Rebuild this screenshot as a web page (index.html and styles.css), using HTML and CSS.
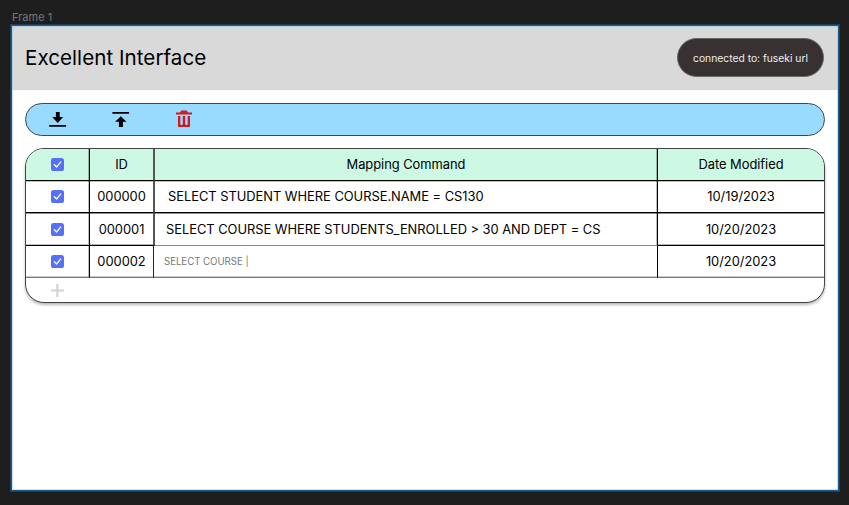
FILE: index.html
```html
<!DOCTYPE html>
<html lang="en">
<head>
<meta charset="utf-8">
<title>Excellent Interface</title>
<link rel="stylesheet" href="styles.css">
</head>
<body>
<svg class="defs" width="0" height="0" aria-hidden="true">
  <symbol id="check" viewBox="0 0 13 13"><rect width="13" height="13" rx="2.6" fill="#5570fb"/><path d="M3.3 6.8 5.6 9 9.8 3.9" fill="none" stroke="#fff" stroke-width="1.3" stroke-linecap="round" stroke-linejoin="round"/></symbol>
</svg>
<div class="frame-label">Frame 1</div>
<main class="frame">
  <header class="header">
    <h1>Excellent Interface</h1>
    <div class="status">connected to: fuseki url</div>
  </header>
  <nav class="toolbar">
    <svg class="icon" viewBox="0 0 18 18"><path d="M6.9 2.1h3.8v5h3.5L8.7 13 3.3 7.1h3.6zM.2 15h16.9v1.8H.2z"/></svg>
    <svg class="icon" viewBox="0 0 18 18"><path d="M.4 2h16.7v1.8H.4zM8.8 6.2l5.7 5.6h-3.6V17H6.9v-5.2H3.1z"/></svg>
    <svg class="icon trash" viewBox="0 0 18 18"><path d="M1 2.4h4L6.3.5h5.4L13 2.4h4v2.1H1zM3 6h2.3v8.8h2.5V6h2.4v8.8h2.5V6H15v11H3z"/></svg>
  </nav>
  <section class="table">
    <div class="row head">
      <div class="cell"><svg class="check"><use href="#check"/></svg></div>
      <div class="cell id"><span>ID</span></div>
      <div class="cell"><span>Mapping Command</span></div>
      <div class="cell"><span>Date Modified</span></div>
    </div>
    <div class="row first">
      <div class="cell"><svg class="check"><use href="#check"/></svg></div>
      <div class="cell id"><span>000000</span></div>
      <div class="cell command"><span>SELECT STUDENT WHERE COURSE.NAME = CS130</span></div>
      <div class="cell"><span>10/19/2023</span></div>
    </div>
    <div class="row second">
      <div class="cell"><svg class="check"><use href="#check"/></svg></div>
      <div class="cell id"><span>000001</span></div>
      <div class="cell command"><span>SELECT COURSE WHERE STUDENTS_ENROLLED &gt; 30 AND DEPT = CS</span></div>
      <div class="cell"><span>10/20/2023</span></div>
    </div>
    <div class="row editing">
      <div class="cell"><svg class="check"><use href="#check"/></svg></div>
      <div class="cell id"><span>000002</span></div>
      <div class="cell command"><span>SELECT COURSE |</span></div>
      <div class="cell date"><span>10/20/2023</span></div>
    </div>
    <div class="add"><svg viewBox="0 0 13 13"><path d="M5.3 0h2.2v5.4H13v2.2H7.5V13H5.3V7.6H0V5.4h5.3z"/></svg></div>
  </section>
</main>
</body>
</html>
```
FILE: styles.css
```css
* { box-sizing: border-box; }
body {
  margin: 0;
  height: 505px;
  padding: 10px 10px 14px 11px;
  overflow: hidden;
  background: #1e1e1e;
  color: #000;
  font-family: Inter, "Liberation Sans", sans-serif;
}
.defs { display: block; }
.frame-label { height: 15px; padding-left: 1px; font-size: 11px; line-height: 14px; color: #777; }
.frame {
  height: 466px;
  border: 1px solid #1e5c8c;
  background: #fff;
  box-shadow: 0 0 0 1px #1c3e58, inset 0 0 0 1px #c5e0f6;
}
.header {
  display: flex;
  align-items: center;
  justify-content: space-between;
  height: 64px;
  padding: 0 14px 1px 13px;
  background: #d9d9d9;
  box-shadow: inset 1px 1px #b0cce1, inset -1px 0 #b0cce1;
}
h1 { margin: 0 0 1px; font-size: 20.6px; line-height: 25px; font-weight: 400; letter-spacing: .04px; }
.status {
  width: 147px;
  height: 39px;
  margin-bottom: 1px;
  border: 1px solid #6b6868;
  border-radius: 20px;
  background: #383131;
  color: #eee;
  font-size: 10.3px;
  line-height: 39px;
  text-align: center;
}
.toolbar {
  display: flex;
  align-items: center;
  gap: 45px;
  height: 33px;
  margin: 13px 13px 0;
  padding: 0 0 1px 23px;
  border: 1px solid #3c4850;
  border-radius: 17px;
  background: #99daff;
}
.icon { display: block; width: 18px; height: 18px; }
.trash { fill: #d01c20; }
.table {
  height: 155px;
  margin: 12px 13px 0;
  overflow: hidden;
  border: 1px solid #444;
  border-radius: 19px;
  background: #fff;
  box-shadow: 0 2px 3px rgba(0, 0, 0, .28);
}
.row { display: grid; grid-template-columns: 64px 65px 503px 1fr; height: 32px; }
.cell {
  display: flex;
  align-items: center;
  justify-content: center;
  border-right: 1px solid #000;
  border-bottom: 1px solid #000;
  box-shadow: inset -1px 0 rgba(0, 0, 0, .25), 0 1px rgba(0, 0, 0, .25);
  font-size: 12.9px;
  letter-spacing: -.03px;
  white-space: pre;
}
.cell.id { border-right: 2px solid #555; box-shadow: 0 1px rgba(0, 0, 0, .25); }
.cell:last-child { border-right: 0; box-shadow: 0 1px rgba(0, 0, 0, .25); }
.head .cell { background: #ccf8e4; }
.command { justify-content: flex-start; padding-left: 11px; }
.first .cell { box-shadow: 0 1px rgba(0, 0, 0, .45); }
.first .command { padding-left: 13px; }
.second { height: 33px; }
.second .cell { padding-top: 1px; box-shadow: inset 0 -1px rgba(0, 0, 0, .3); }
.second .command { border-bottom-color: #888; box-shadow: none; }
.first .cell:first-child,
.first .command { box-shadow: inset -1px 0 rgba(0, 0, 0, .25), 0 1px rgba(0, 0, 0, .45); }
.second .cell:first-child { box-shadow: inset -1px -1px rgba(0, 0, 0, .25); }
.second .command { box-shadow: inset -1px 0 rgba(0, 0, 0, .25); }
.editing { grid-template-columns: 64px 64px 504px 1fr; }
.editing .cell { border-bottom-color: #777; box-shadow: inset 0 -1px #ccc; }
.editing .cell:first-child { box-shadow: inset -1px 0 rgba(0, 0, 0, .25), inset 0 -1px #ccc; }
.editing .cell.id { border-right: 1px solid #222; }
.editing .command { padding: 0 0 1px 10px; font-size: 9.7px; letter-spacing: -.05px; color: #777; }
.check { display: block; width: 13px; height: 13px; }
.add { display: flex; align-items: center; height: 25px; padding-left: 25px; }
.add svg { width: 13px; height: 13px; fill: #d2d2d2; }
```
